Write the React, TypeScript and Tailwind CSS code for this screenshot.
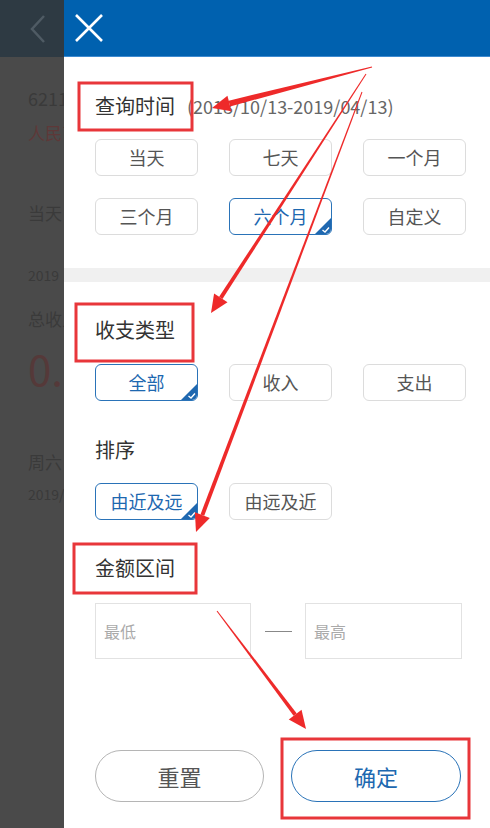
import React from "react";

const font = { fontFamily: '"Noto Sans CJK SC", "Noto Sans", sans-serif' };

function Chip({ label, active = false }: { label: string; active?: boolean }) {
  return (
    <div
      className={
        "relative h-[37px] flex items-center justify-center rounded-[6px] bg-white text-[18px] overflow-hidden " +
        (active ? "border-[1.5px] border-[#2a73b8] text-[#1d68b0]" : "border border-[#dcdcdc] text-[#555]")
      }
    >
      {label}
      {active && (
        <svg className="absolute right-0 bottom-0" width="16" height="16" viewBox="0 0 16 16">
          <path d="M16 0 L16 16 L0 16 Z" fill="#1f68b0" />
          <path d="M7.5 12 L10 14 L14 9.5" stroke="#fff" strokeWidth="1.4" fill="none" />
        </svg>
      )}
    </div>
  );
}

function Arrow({ x1, y1, x2, y2, w = 4 }: { x1: number; y1: number; x2: number; y2: number; w?: number }) {
  const dx = x2 - x1;
  const dy = y2 - y1;
  const len = Math.hypot(dx, dy);
  const ux = dx / len;
  const uy = dy / len;
  const nx = -uy;
  const ny = ux;
  const head = 18;
  const hw = 8;
  const bx = x2 - ux * head;
  const by = y2 - uy * head;
  const shaft = [
    [x1 + nx * 0.5, y1 + ny * 0.5],
    [bx + (nx * w) / 2, by + (ny * w) / 2],
    [bx - (nx * w) / 2, by - (ny * w) / 2],
    [x1 - nx * 0.5, y1 - ny * 0.5],
  ];
  const tip = [
    [x2, y2],
    [bx + nx * hw, by + ny * hw],
    [bx - nx * hw, by - ny * hw],
  ];
  const pts = (a: number[][]) => a.map((p) => p.join(",")).join(" ");
  return (
    <g fill="#ee2a2a">
      <polygon points={pts(shaft)} />
      <polygon points={pts(tip)} />
    </g>
  );
}

export default function App() {
  return (
    <div className="relative w-[490px] h-[828px] flex overflow-hidden bg-white" style={font}>
      {/* dimmed page behind the drawer */}
      <div className="w-[64px] shrink-0 flex flex-col bg-[#4a4a4a] overflow-hidden">
        <div className="h-[57px] bg-[#2e3a43] flex items-center pl-[28px]">
          <svg width="20" height="30" viewBox="0 0 20 30">
            <path d="M16 2 L4 15 L16 28" stroke="#4f5b64" strokeWidth="2.5" fill="none" />
          </svg>
        </div>
        <div className="pl-[28px] whitespace-nowrap text-[#3a3a3a]">
          <div className="mt-[29px] text-[18px] leading-[24px]">6211</div>
          <div className="mt-[11px] text-[17px] leading-[24px] text-[#5e3838]">人民币</div>
          <div className="mt-[56px] text-[17px] leading-[24px]">当天</div>
          <div className="mt-[40px] text-[14px] leading-[20px]">2019</div>
          <div className="mt-[22px] text-[17px] leading-[24px]">总收入</div>
          <div className="mt-[12px] text-[42px] leading-[50px] text-[#553939]">0.</div>
          <div className="mt-[57px] text-[17px] leading-[24px]">周六</div>
          <div className="mt-[10px] text-[14px] leading-[20px]">2019/</div>
        </div>
      </div>

      {/* filter drawer */}
      <div className="flex-1 flex flex-col">
        <div className="h-[57px] bg-[#0061af] border-b border-[#3d8ad0] flex items-center pl-[10px]">
          <svg width="30" height="30" viewBox="0 0 30 30">
            <path d="M2 2 L28 28 M28 2 L2 28" stroke="#fff" strokeWidth="2.6" />
          </svg>
        </div>

        <div className="px-[31px] pr-[24px]">
          <div className="mt-[36px] flex items-baseline h-[24px]">
            <span className="text-[20px] leading-[24px] text-[#333]">查询时间</span>
            <span className="ml-[12px] text-[18px] text-[#666]">(2018/10/13-2019/04/13)</span>
          </div>
          <div className="mt-[22px] grid grid-cols-[103px_103px_103px] gap-x-[31px] gap-y-[22px]">
            <Chip label="当天" />
            <Chip label="七天" />
            <Chip label="一个月" />
            <Chip label="三个月" />
            <Chip label="六个月" active />
            <Chip label="自定义" />
          </div>
        </div>

        <div className="mt-[33px] h-[14px] bg-[#f0f0f0]" />

        <div className="px-[31px] pr-[24px]">
          <div className="mt-[36px] text-[20px] leading-[24px] text-[#333]">收支类型</div>
          <div className="mt-[22px] grid grid-cols-[103px_103px_103px] gap-x-[31px]">
            <Chip label="全部" active />
            <Chip label="收入" />
            <Chip label="支出" />
          </div>

          <div className="mt-[37px] text-[20px] leading-[24px] text-[#333]">排序</div>
          <div className="mt-[21px] grid grid-cols-[103px_103px_103px] gap-x-[31px]">
            <Chip label="由近及远" active />
            <Chip label="由远及近" />
          </div>

          <div className="mt-[36px] text-[20px] leading-[24px] text-[#333]">金额区间</div>
          <div className="mt-[23px] flex items-center">
            <div className="w-[156px] h-[56px] border border-[#e2e2e2] flex items-center pl-[8px] text-[16px] text-[#aaa]">
              最低
            </div>
            <div className="w-[54px] flex justify-center">
              <div className="w-[27px] h-px bg-[#888]" />
            </div>
            <div className="w-[157px] h-[56px] border border-[#e2e2e2] flex items-center pl-[8px] text-[16px] text-[#aaa]">
              最高
            </div>
          </div>

          <div className="mt-[91px] flex gap-[27px]">
            <button className="w-[169px] h-[52px] rounded-full border-[1.5px] border-[#b5b5b5] text-[22px] text-[#555]">
              重置
            </button>
            <button className="w-[170px] h-[52px] rounded-full border-[1.5px] border-[#2a73b8] text-[22px] text-[#1d68b0]">
              确定
            </button>
          </div>
        </div>
      </div>

      {/* annotation overlay */}
      <svg className="absolute inset-0 pointer-events-none" width="490" height="828" viewBox="0 0 490 828">
        <g fill="none" stroke="#e8363a" strokeWidth="3">
          <rect x="79" y="83" width="113" height="47" />
          <rect x="76" y="304" width="117" height="57" />
          <rect x="74" y="544" width="122" height="49" />
          <rect x="282" y="739" width="187" height="79" />
        </g>
        <Arrow x1={372} y1={67} x2={212} y2={108} w={6} />
        <Arrow x1={366} y1={74} x2={211} y2={313} w={4} />
        <Arrow x1={362} y1={92} x2={196} y2={532} w={4} />
        <Arrow x1={217} y1={611} x2={306} y2={729} w={4} />
      </svg>
    </div>
  );
}
